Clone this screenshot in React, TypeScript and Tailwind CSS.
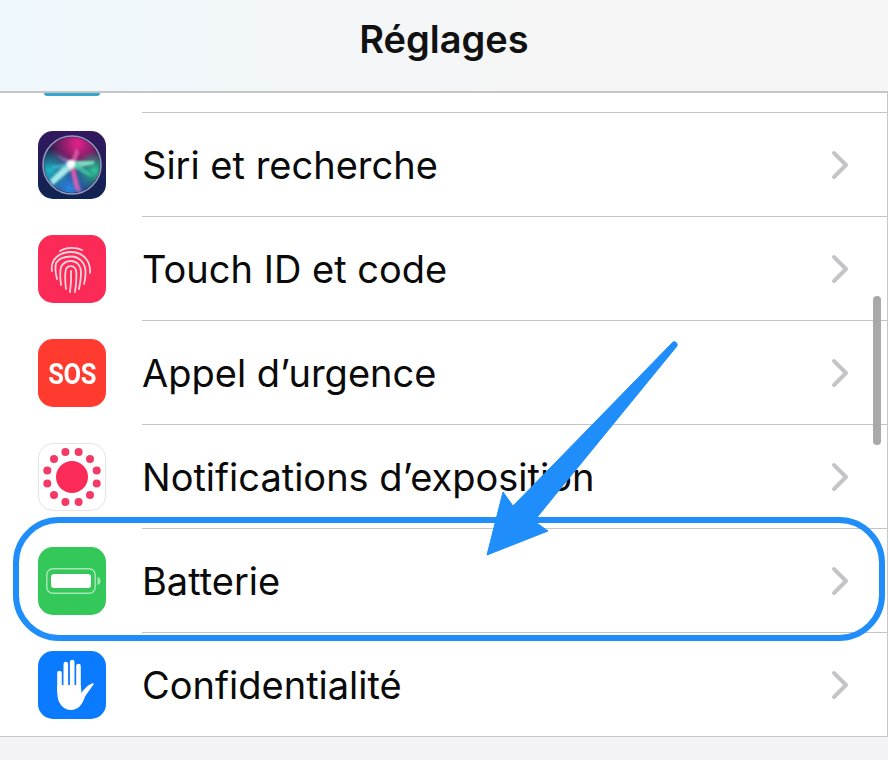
const font = "[font-family:Inter,'Liberation_Sans',sans-serif]"

function Chevron() {
  return (
    <svg width="20" height="32" viewBox="0 0 20 32" fill="none" className="mr-[38px]">
      <path d="M4 4l12 12L4 28" stroke="#c4c4c8" strokeWidth="4" strokeLinecap="round" strokeLinejoin="round" />
    </svg>
  )
}

function Tile({ className = '', children }: { className?: string; children?: React.ReactNode }) {
  return (
    <div className={`mt-[2px] flex h-[68px] w-[68px] shrink-0 items-center justify-center overflow-hidden rounded-[15px] ${className}`}>
      {children}
    </div>
  )
}

function SiriIcon() {
  return (
    <svg width="68" height="68" viewBox="0 0 68 68">
      <defs>
        <linearGradient id="siriBg" x1="0" y1="0" x2="0" y2="1">
          <stop offset="0" stopColor="#33185f" />
          <stop offset="1" stopColor="#0f2452" />
        </linearGradient>
        <radialGradient id="pinkGlow" cx="0.6" cy="0.12" r="0.55">
          <stop offset="0" stopColor="#e8218c" />
          <stop offset="1" stopColor="#e8218c" stopOpacity="0" />
        </radialGradient>
        <radialGradient id="blueGlow" cx="0.45" cy="0.92" r="0.55">
          <stop offset="0" stopColor="#2c86e6" />
          <stop offset="1" stopColor="#2c86e6" stopOpacity="0" />
        </radialGradient>
        <radialGradient id="tealGlow" cx="0.1" cy="0.6" r="0.4">
          <stop offset="0" stopColor="#22b6c8" />
          <stop offset="1" stopColor="#22b6c8" stopOpacity="0" />
        </radialGradient>
        <radialGradient id="greenGlow" cx="0.9" cy="0.6" r="0.35">
          <stop offset="0" stopColor="#2fc79a" />
          <stop offset="1" stopColor="#2fc79a" stopOpacity="0" />
        </radialGradient>
        <filter id="siriSoft" x="-20%" y="-20%" width="140%" height="140%">
          <feGaussianBlur stdDeviation="1" />
        </filter>
      </defs>
      <rect width="68" height="68" fill="url(#siriBg)" />
      <circle cx="34" cy="34" r="29" fill="#1f1c46" stroke="#9497bc" strokeWidth="1.6" />
      <circle cx="34" cy="34" r="28" fill="url(#pinkGlow)" />
      <circle cx="34" cy="34" r="28" fill="url(#blueGlow)" />
      <circle cx="34" cy="34" r="28" fill="url(#tealGlow)" />
      <circle cx="34" cy="34" r="28" fill="url(#greenGlow)" />
      <g filter="url(#siriSoft)">
        <path d="M18 24 L33 29 L35 34 L28 32 Z" fill="#9d8ccc" opacity="0.6" />
        <path d="M38 17 L41 21 L37 34 L32 33 Z" fill="#f06ab8" opacity="0.7" />
        <path d="M43 62 L37 58 L31 34 L36 33 Z" fill="#ee5fae" opacity="0.85" />
        <path d="M56 30 L56 33 L38 37 L34 30 Z" fill="#86f0d0" opacity="0.85" />
        <path d="M55 45 L49 44 L34 36 L37 30 Z" fill="#44d4ac" opacity="0.75" />
        <path d="M12 49 L15 54 L36 36 L31 30 Z" fill="#b4f4ee" opacity="0.9" />
        <path d="M14 35 L14 38 L33 36 L33 31 Z" fill="#48c8d8" opacity="0.6" />
        <circle cx="33" cy="33" r="4" fill="#ffffff" />
      </g>
    </svg>
  )
}

function FingerprintIcon() {
  return (
    <svg width="68" height="68" viewBox="0 0 68 68" fill="none" stroke="#ffd3dc" strokeWidth="1.8" strokeLinecap="round">
      <path d="M22 16C28 12 38 12 44 15" />
      <path d="M14 36C12 24 22 17 33 17C44 17 53 25 52 38" />
      <path d="M19 44C17 36 17 32 18 28C21 23 27 21.500 33 21.500C42 21.500 48 29 47.500 38C47.500 42 47 46 46 49" />
      <path d="M23 50C22 42 22 36 23 32C25 28 29 26 33 26C39 26 43 31 43 37C43 43 42 49 41 54" />
      <path d="M28 54C27 46 27 38 28 34C30 30 36 30 38 35C39 41 38 50 37 57" />
      <path d="M33 36C33.500 44 33 50 32 57" />
    </svg>
  )
}

function ExposureIcon() {
  const dots = [
    [-6.6, -25], [6.6, -25], [-18, -18], [18, -18], [-24.7, -6.5], [24.7, -6.5],
    [-24.7, 6.5], [24.7, 6.5], [-18, 18], [18, 18], [-6.6, 25], [6.6, 25],
  ]
  return (
    <svg width="68" height="68" viewBox="0 0 68 68" className="shrink-0">
      <circle cx="34" cy="34" r="16" fill="#fb2a57" />
      {dots.map(([x, y]) => (
        <circle key={`${x}-${y}`} cx={34 + x} cy={34 + y} r="4" fill="#f33a67" />
      ))}
    </svg>
  )
}

function BatteryIcon() {
  return (
    <svg width="68" height="68" viewBox="0 0 68 68" fill="none">
      <rect x="8.800" y="21.800" width="48.400" height="24.400" rx="6" stroke="#a6e6b4" strokeWidth="1.500" />
      <rect x="13" y="27" width="40" height="14" rx="3" fill="#ffffff" />
      <path d="M59.500 30c2 .5 3 2 3 4s-1 3.500-3 4z" fill="#a6e6b4" />
    </svg>
  )
}

function HandIcon() {
  return (
    <svg width="68" height="68" viewBox="0 0 68 68" fill="#ffffff">
      <g stroke="#ffffff" strokeWidth="4.600" strokeLinecap="round">
        <path d="M21.500 22V40" />
        <path d="M27.800 13V38" />
        <path d="M34.200 11V38" />
        <path d="M40.500 15V38" />
      </g>
      <path d="M19.300 34V42C19.300 52 25 59 33 59C40 59 44 54 46.500 47C48 43 52 39 55.500 33.500C56 32.500 55 32 54 32.500C50 34 46 38 43.500 42L42.800 34Z" />
    </svg>
  )
}

function Row({ icon, label }: { icon: React.ReactNode; label: string }) {
  return (
    <div className="flex h-[104px] items-center pl-[38px]">
      {icon}
      <div className="ml-[36px] flex h-full flex-1 items-center justify-between border-t border-[#c4c4c6] pt-[1px]">
        <span className="text-[38px] leading-none text-[#0a0a0a]">{label}</span>
        <Chevron />
      </div>
    </div>
  )
}

export default function App() {
  return (
    <div className={`relative h-[760px] w-[888px] overflow-hidden bg-white ${font}`}>
      <header className="flex h-[93px] items-center justify-center border-b-2 border-[#c6c6c8] bg-gradient-to-r from-[#eef7fc] to-[#f6f6f6] to-[60%] pb-[12px]">
        <h1 className="text-[38px] font-semibold text-[#111]">Réglages</h1>
      </header>

      <div className="ml-[44px] h-[3px] w-[56px] rounded-b-[8px] bg-[#35a5cb]" />
      <div className="h-[16px]" />

      <Row icon={<Tile><SiriIcon /></Tile>} label="Siri et recherche" />
      <Row icon={<Tile className="bg-[#fb2a57]"><FingerprintIcon /></Tile>} label="Touch ID et code" />
      <Row
        icon={
          <Tile className="bg-[#ff3b30]">
            <span className="font-['Roboto',sans-serif] text-[30px] font-bold tracking-[-0.5px] text-white [transform:scaleX(0.85)]">SOS</span>
          </Tile>
        }
        label="Appel d’urgence"
      />
      <Row icon={<Tile className="border border-[#e4e4e6] bg-white"><ExposureIcon /></Tile>} label="Notifications d’exposition" />
      <Row icon={<Tile className="bg-[#34c759]"><BatteryIcon /></Tile>} label="Batterie" />
      <Row icon={<Tile className="bg-[#0a7aff]"><HandIcon /></Tile>} label="Confidentialité" />

      <div className="h-[24px] border-t border-[#c8c8ca] bg-[#f2f2f7]" />

      {/* overlays: scroll indicator, edge line, annotation */}
      <div className="absolute left-[873px] top-[296px] h-[149px] w-[8px] rounded-full bg-[#a9a9a9]" />
      <div className="absolute right-0 top-[93px] h-[644px] w-[1px] bg-[#c8c8c8]" />
      <div className="absolute left-[13px] top-[517px] h-[124px] w-[872px] rounded-[46px] border-[6px] border-[#1f8efa]" />
      <svg className="absolute left-[480px] top-[335px]" width="205" height="230" viewBox="480 335 205 230">
        <path
          d="M673 342c2-1 5 1 4 4L534 521l14 10-61 24 16-63 10 14z"
          fill="#1f8efa"
          stroke="#1f8efa"
          strokeWidth="1"
          strokeLinejoin="round"
        />
      </svg>
    </div>
  )
}
